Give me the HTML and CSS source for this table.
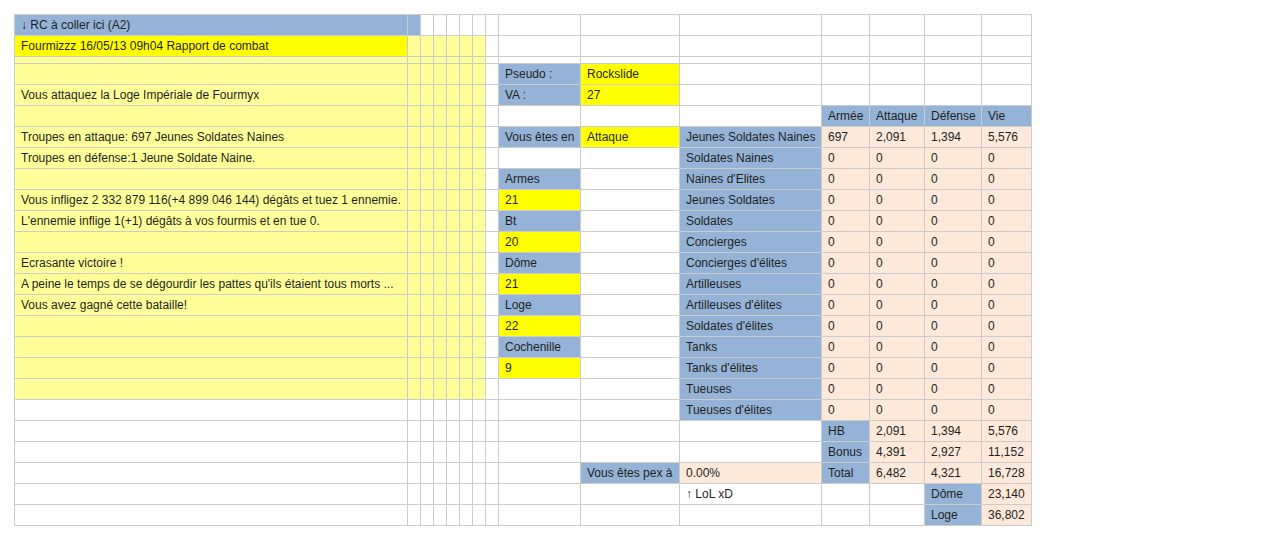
FILE: index.html
```html
<!DOCTYPE html>
<html lang="fr">
<head>
<meta charset="utf-8">
<title>RC</title>
<link rel="stylesheet" href="styles.css">
</head>
<body>
<table class="sheet">
<colgroup>
<col class="c-a"><col class="c-n"><col class="c-n"><col class="c-n"><col class="c-n"><col class="c-n"><col class="c-n"><col class="c-n">
<col class="c-i"><col class="c-j"><col class="c-k"><col class="c-l"><col class="c-m"><col class="c-nn"><col class="c-o">
</colgroup>
<tbody>
<tr><td class="b">↓ RC à coller ici (A2)</td><td class="b"></td><td></td><td></td><td></td><td></td><td></td><td></td><td></td><td></td><td></td><td></td><td></td><td></td><td></td></tr>
<tr><td class="y">Fourmizzz 16/05/13 09h04 Rapport de combat</td><td class="ly"></td><td class="ly"></td><td class="ly"></td><td class="ly"></td><td class="ly"></td><td class="ly"></td><td></td><td></td><td></td><td></td><td></td><td></td><td></td><td></td></tr>
<tr class="thin"><td class="ly"></td><td class="ly"></td><td class="ly"></td><td class="ly"></td><td class="ly"></td><td class="ly"></td><td class="ly"></td><td></td><td></td><td></td><td></td><td></td><td></td><td></td><td></td></tr>
<tr><td class="ly"></td><td class="ly"></td><td class="ly"></td><td class="ly"></td><td class="ly"></td><td class="ly"></td><td class="ly"></td><td></td><td class="b">Pseudo :</td><td class="y">Rockslide</td><td></td><td></td><td></td><td></td><td></td></tr>
<tr><td class="ly">Vous attaquez la Loge Impériale de Fourmyx</td><td class="ly"></td><td class="ly"></td><td class="ly"></td><td class="ly"></td><td class="ly"></td><td class="ly"></td><td></td><td class="b">VA :</td><td class="y">27</td><td></td><td></td><td></td><td></td><td></td></tr>
<tr><td class="ly"></td><td class="ly"></td><td class="ly"></td><td class="ly"></td><td class="ly"></td><td class="ly"></td><td class="ly"></td><td></td><td></td><td></td><td></td><td class="b">Armée</td><td class="b">Attaque</td><td class="b">Défense</td><td class="b">Vie</td></tr>
<tr><td class="ly">Troupes en attaque: 697 Jeunes Soldates Naines</td><td class="ly"></td><td class="ly"></td><td class="ly"></td><td class="ly"></td><td class="ly"></td><td class="ly"></td><td></td><td class="b">Vous êtes en</td><td class="y">Attaque</td><td class="b">Jeunes Soldates Naines</td><td class="p">697</td><td class="p">2,091</td><td class="p">1,394</td><td class="p">5,576</td></tr>
<tr><td class="ly">Troupes en défense:1 Jeune Soldate Naine.</td><td class="ly"></td><td class="ly"></td><td class="ly"></td><td class="ly"></td><td class="ly"></td><td class="ly"></td><td></td><td></td><td></td><td class="b">Soldates Naines</td><td class="p">0</td><td class="p">0</td><td class="p">0</td><td class="p">0</td></tr>
<tr><td class="ly"></td><td class="ly"></td><td class="ly"></td><td class="ly"></td><td class="ly"></td><td class="ly"></td><td class="ly"></td><td></td><td class="b">Armes</td><td></td><td class="b">Naines d'Elites</td><td class="p">0</td><td class="p">0</td><td class="p">0</td><td class="p">0</td></tr>
<tr><td class="ly">Vous infligez 2 332 879 116(+4 899 046 144) dégâts et tuez 1 ennemie.</td><td class="ly"></td><td class="ly"></td><td class="ly"></td><td class="ly"></td><td class="ly"></td><td class="ly"></td><td></td><td class="y">21</td><td></td><td class="b">Jeunes Soldates</td><td class="p">0</td><td class="p">0</td><td class="p">0</td><td class="p">0</td></tr>
<tr><td class="ly">L'ennemie inflige 1(+1) dégâts à vos fourmis et en tue 0.</td><td class="ly"></td><td class="ly"></td><td class="ly"></td><td class="ly"></td><td class="ly"></td><td class="ly"></td><td></td><td class="b">Bt</td><td></td><td class="b">Soldates</td><td class="p">0</td><td class="p">0</td><td class="p">0</td><td class="p">0</td></tr>
<tr><td class="ly"></td><td class="ly"></td><td class="ly"></td><td class="ly"></td><td class="ly"></td><td class="ly"></td><td class="ly"></td><td></td><td class="y">20</td><td></td><td class="b">Concierges</td><td class="p">0</td><td class="p">0</td><td class="p">0</td><td class="p">0</td></tr>
<tr><td class="ly">Ecrasante victoire !</td><td class="ly"></td><td class="ly"></td><td class="ly"></td><td class="ly"></td><td class="ly"></td><td class="ly"></td><td></td><td class="b">Dôme</td><td></td><td class="b">Concierges d'élites</td><td class="p">0</td><td class="p">0</td><td class="p">0</td><td class="p">0</td></tr>
<tr><td class="ly">A peine le temps de se dégourdir les pattes qu'ils étaient tous morts ...</td><td class="ly"></td><td class="ly"></td><td class="ly"></td><td class="ly"></td><td class="ly"></td><td class="ly"></td><td></td><td class="y">21</td><td></td><td class="b">Artilleuses</td><td class="p">0</td><td class="p">0</td><td class="p">0</td><td class="p">0</td></tr>
<tr><td class="ly">Vous avez gagné cette bataille!</td><td class="ly"></td><td class="ly"></td><td class="ly"></td><td class="ly"></td><td class="ly"></td><td class="ly"></td><td></td><td class="b">Loge</td><td></td><td class="b">Artilleuses d'élites</td><td class="p">0</td><td class="p">0</td><td class="p">0</td><td class="p">0</td></tr>
<tr><td class="ly"></td><td class="ly"></td><td class="ly"></td><td class="ly"></td><td class="ly"></td><td class="ly"></td><td class="ly"></td><td></td><td class="y">22</td><td></td><td class="b">Soldates d'élites</td><td class="p">0</td><td class="p">0</td><td class="p">0</td><td class="p">0</td></tr>
<tr><td class="ly"></td><td class="ly"></td><td class="ly"></td><td class="ly"></td><td class="ly"></td><td class="ly"></td><td class="ly"></td><td></td><td class="b">Cochenille</td><td></td><td class="b">Tanks</td><td class="p">0</td><td class="p">0</td><td class="p">0</td><td class="p">0</td></tr>
<tr><td class="ly"></td><td class="ly"></td><td class="ly"></td><td class="ly"></td><td class="ly"></td><td class="ly"></td><td class="ly"></td><td></td><td class="y">9</td><td></td><td class="b">Tanks d'élites</td><td class="p">0</td><td class="p">0</td><td class="p">0</td><td class="p">0</td></tr>
<tr><td class="ly"></td><td class="ly"></td><td class="ly"></td><td class="ly"></td><td class="ly"></td><td class="ly"></td><td class="ly"></td><td></td><td></td><td></td><td class="b">Tueuses</td><td class="p">0</td><td class="p">0</td><td class="p">0</td><td class="p">0</td></tr>
<tr><td></td><td></td><td></td><td></td><td></td><td></td><td></td><td></td><td></td><td></td><td class="b">Tueuses d'élites</td><td class="p">0</td><td class="p">0</td><td class="p">0</td><td class="p">0</td></tr>
<tr><td></td><td></td><td></td><td></td><td></td><td></td><td></td><td></td><td></td><td></td><td></td><td class="b">HB</td><td class="p">2,091</td><td class="p">1,394</td><td class="p">5,576</td></tr>
<tr><td></td><td></td><td></td><td></td><td></td><td></td><td></td><td></td><td></td><td></td><td></td><td class="b">Bonus</td><td class="p">4,391</td><td class="p">2,927</td><td class="p">11,152</td></tr>
<tr><td></td><td></td><td></td><td></td><td></td><td></td><td></td><td></td><td></td><td class="b">Vous êtes pex à</td><td class="p">0.00%</td><td class="b">Total</td><td class="p">6,482</td><td class="p">4,321</td><td class="p">16,728</td></tr>
<tr><td></td><td></td><td></td><td></td><td></td><td></td><td></td><td></td><td></td><td></td><td>↑ LoL xD</td><td></td><td></td><td class="b">Dôme</td><td class="p">23,140</td></tr>
<tr><td></td><td></td><td></td><td></td><td></td><td></td><td></td><td></td><td></td><td></td><td></td><td></td><td></td><td class="b">Loge</td><td class="p">36,802</td></tr>
</tbody>
</table>
</body>
</html>
```
FILE: styles.css
```css
html, body {
  margin: 0;
  padding: 0;
  background: #ffffff;
}
body {
  padding: 14px 0 0 14px;
  font-family: "Liberation Sans", Arial, sans-serif;
  font-size: 12px;
  color: #1f1f1f;
}
.sheet {
  border-collapse: collapse;
  table-layout: fixed;
  width: 1017px;
}
.c-a { width: 393px; }
.c-n { width: 13px; }
.c-i { width: 82px; }
.c-j { width: 99px; }
.c-k { width: 142px; }
.c-l { width: 48px; }
.c-m { width: 55px; }
.c-nn { width: 57px; }
.c-o { width: 50px; }
.sheet td {
  border: 1px solid #cccccc;
  height: 20px;
  padding: 0 0 0 6px;
  white-space: nowrap;
  overflow: hidden;
  vertical-align: middle;
  line-height: 14px;
}
.sheet tr.thin td {
  height: 6px;
  line-height: 6px;
}
.b { background: #95b3d7; }
.y { background: #ffff00; }
.ly { background: #ffff99; }
.p { background: #fde9d9; }
```
